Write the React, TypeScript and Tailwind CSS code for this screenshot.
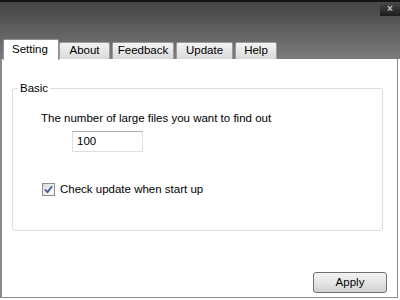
import React from 'react';

const font = { fontFamily: '"Liberation Sans", Arial, sans-serif' };

interface TabProps {
  label: string;
  active?: boolean;
  className?: string;
}

const Tab: React.FC<TabProps> = ({ label, active, className }) =>
  active ? (
    <div
      className={`h-[21px] bg-white border border-b-0 border-[#8e9096] rounded-t-[2px] pl-[8px] text-[11.5px] leading-[19px] text-black -mb-px z-10 ${className ?? ''}`}
    >
      {label}
    </div>
  ) : (
    <div
      className={`h-[17px] bg-gradient-to-b from-[#f3f3f3] to-[#d9d9d9] border border-b-0 border-[#9a9a9a] rounded-t-[2px] flex items-center justify-center text-[11.5px] text-black ${className ?? ''}`}
    >
      {label}
    </div>
  );

const CheckBox: React.FC = () => (
  <div className="w-[13px] h-[13px] border border-[#8f8f8f] bg-gradient-to-br from-[#dcdcdc] to-[#fbfbfb] flex items-center justify-center">
    <svg width="9" height="9" viewBox="0 0 9 9">
      <path d="M1 4.5 L3.5 7.2 L8 1.2" fill="none" stroke="#3c5294" strokeWidth="1.8" />
    </svg>
  </div>
);

export default function App() {
  return (
    <div className="w-[400px] h-[300px] bg-white flex flex-col overflow-hidden" style={font}>
      {/* Title / tab strip */}
      <div className="h-[59px] border-t-2 border-[#141414] bg-gradient-to-b from-[#454545] to-[#7c7c7c] flex flex-col">
        <div className="flex justify-end">
          <div className="w-[20px] h-[14px] bg-gradient-to-b from-[#4a4a4a] to-[#1c1c1c] flex items-center justify-center text-[#c8c8c8] text-[10px] leading-none font-bold">
            ×
          </div>
        </div>
        <div className="mt-auto flex items-end pl-[3px]">
          <Tab label="Setting" active className="w-[56px]" />
          <Tab label="About" className="w-[51px]" />
          <Tab label="Feedback" className="w-[62px] ml-[2px]" />
          <Tab label="Update" className="w-[57px] ml-[2px]" />
          <Tab label="Help" className="w-[42px] ml-[2px]" />
        </div>
      </div>

      {/* Page body */}
      <div className="w-[398px] h-[239px] border-l-2 border-r border-b border-[#8a8a8a] flex flex-col pl-[10px] pr-[10px] pb-[4px]">
        <fieldset className="mt-[22px] w-[371px] h-[150px] border border-[#d5dfe5] rounded-[3px] m-0 p-0">
          <legend className="ml-[5px] px-[2px] text-[11.5px] leading-[14px] text-black">Basic</legend>
          <div className="pl-[28px] pt-[16px] text-[11.5px] text-black leading-[14px]">
            The number of large files you want to find out
          </div>
          <div className="pl-[59px] mt-[6px]">
            <div className="w-[71px] h-[21px] border border-[#dbdfe6] border-t-[#abadb3] bg-white flex items-center pl-[4px] text-[11.5px] text-black">
              100
            </div>
          </div>
          <div className="pl-[29px] mt-[29px] flex items-center gap-[5px] text-[11.5px] text-black">
            <CheckBox />
            <span>Check update when start up</span>
          </div>
        </fieldset>

        <div className="mt-auto flex justify-end">
          <div className="w-[74px] h-[21px] border border-[#707070] rounded-[3px] bg-gradient-to-b from-[#f2f2f2] via-[#e6e6e6] to-[#cfcfcf] flex items-center justify-center text-[11.5px] text-black">
            Apply
          </div>
        </div>
      </div>
    </div>
  );
}
